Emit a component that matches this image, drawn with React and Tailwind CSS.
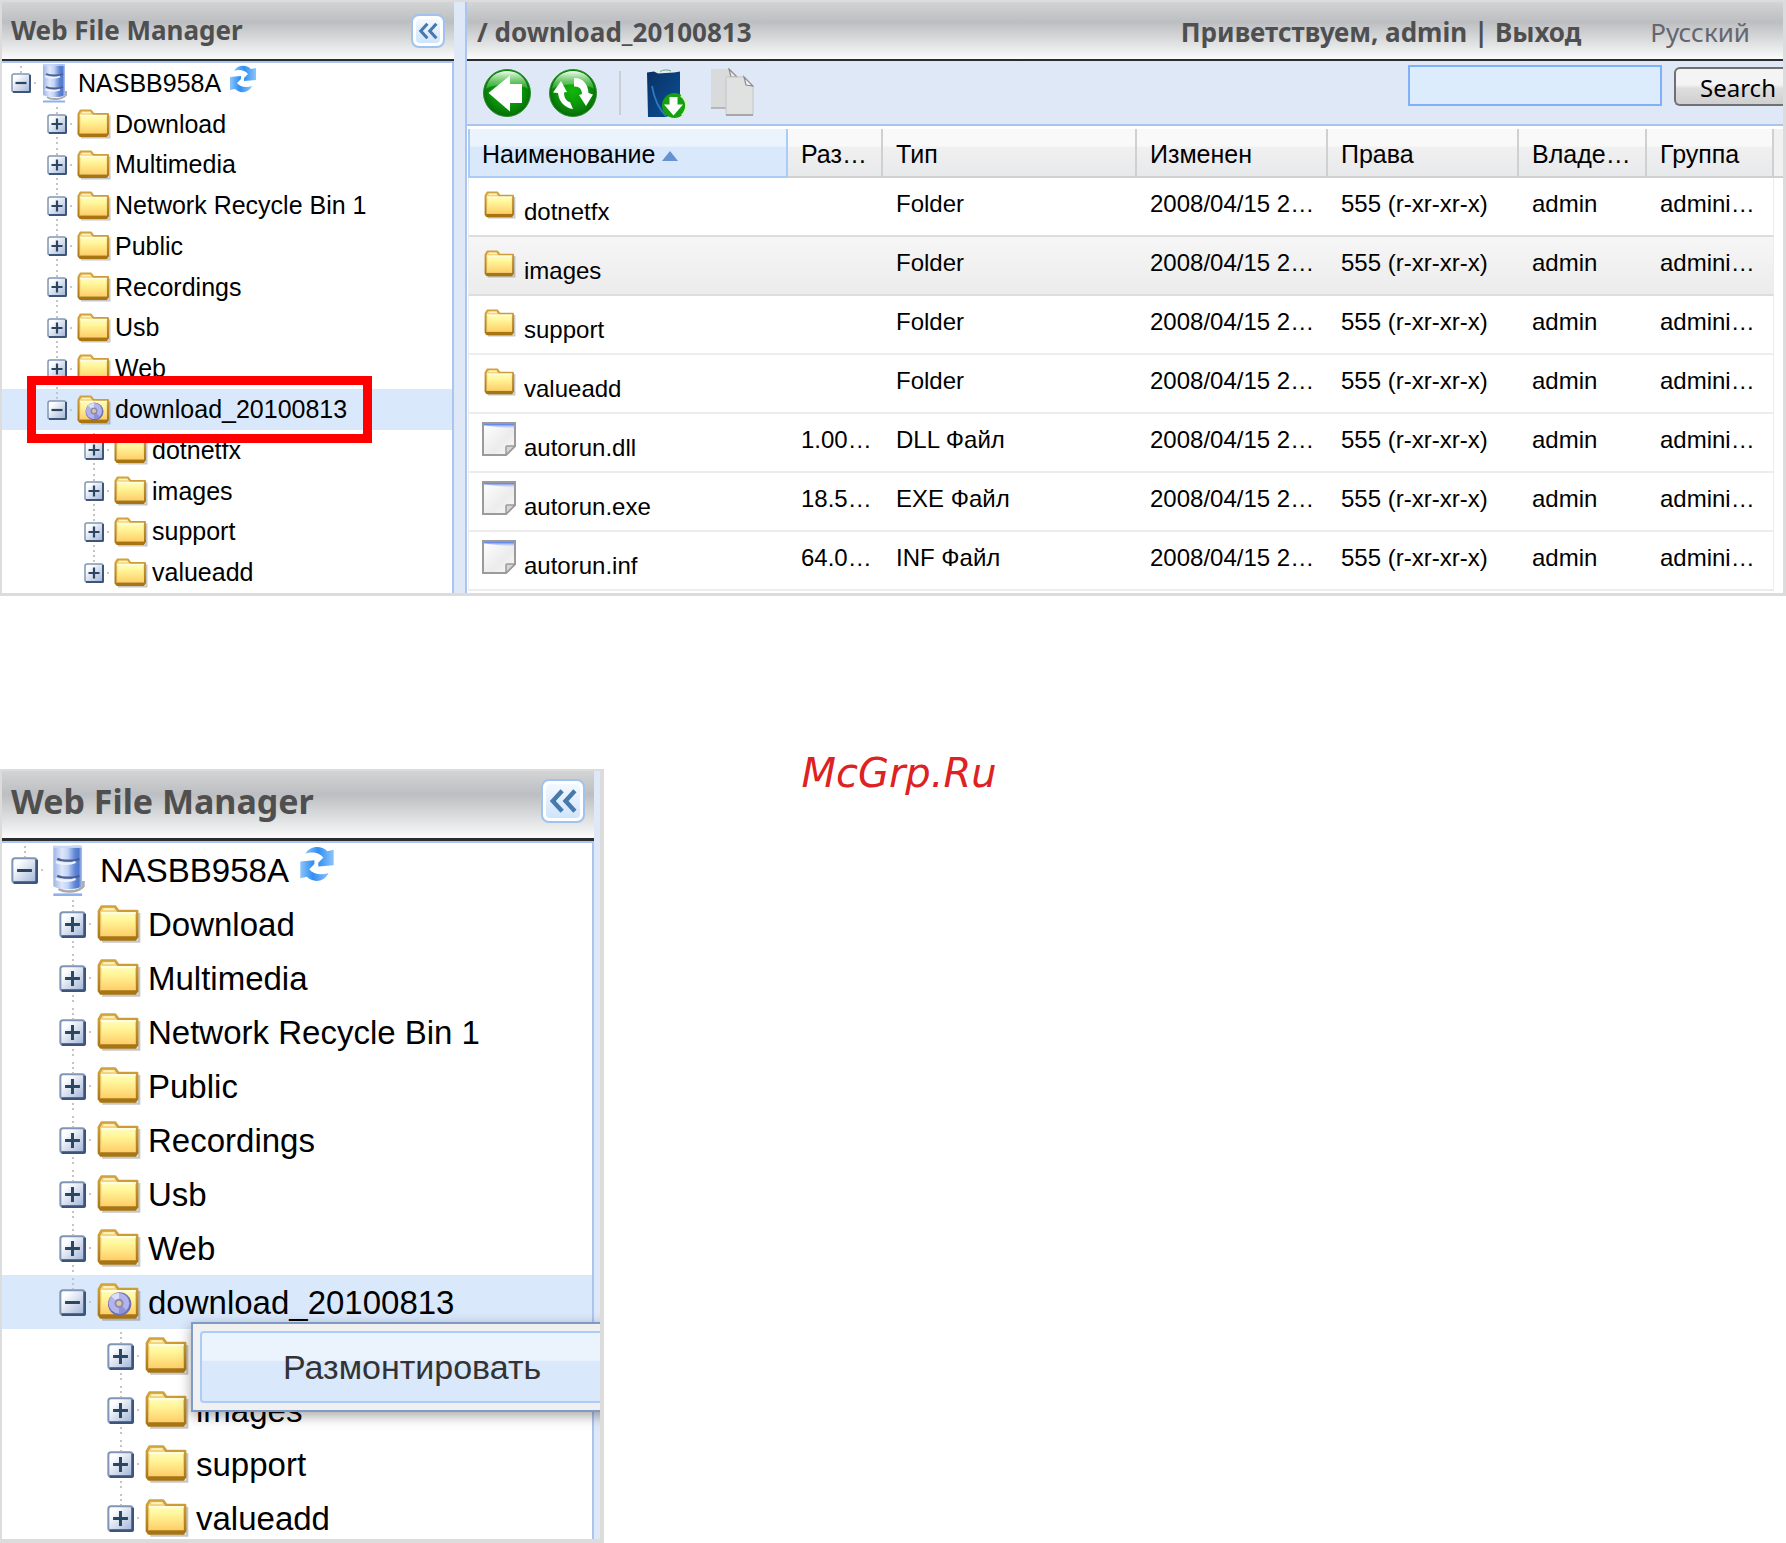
import React from 'react';

const ROWS = [
  { name: 'dotnetfx', type: 'Folder', folder: true },
  { name: 'images', type: 'Folder', folder: true, hover: true },
  { name: 'support', type: 'Folder', folder: true },
  { name: 'valueadd', type: 'Folder', folder: true },
  { name: 'autorun.dll', size: '1.00…', type: 'DLL Файл' },
  { name: 'autorun.exe', size: '18.5…', type: 'EXE Файл' },
  { name: 'autorun.inf', size: '64.0…', type: 'INF Файл' },
];

const NODES = [
  { name: 'NASBB958A', level: 0, open: true, icon: 'server', top: true },
  { name: 'Download', level: 1, top: true, bottom: true },
  { name: 'Multimedia', level: 1, top: true, bottom: true },
  { name: 'Network Recycle Bin 1', level: 1, top: true, bottom: true },
  { name: 'Public', level: 1, top: true, bottom: true },
  { name: 'Recordings', level: 1, top: true, bottom: true },
  { name: 'Usb', level: 1, top: true, bottom: true },
  { name: 'Web', level: 1, top: true, bottom: true },
  { name: 'download_20100813', level: 1, open: true, icon: 'iso', top: true, selected: true },
  { name: 'dotnetfx', level: 2, top: true, bottom: true },
  { name: 'images', level: 2, top: true, bottom: true },
  { name: 'support', level: 2, top: true, bottom: true },
  { name: 'valueadd', level: 2, top: true },
];

// Class sets for the two tree scales
const SIZES = {
  md: {
    row: 'flex-1 text-[25px]',
    indent: ['pl-[9px]', 'pl-[45px]', 'pl-[82px]'],
    expander: 'w-5',
    box: 'size-5',
    folder: 'w-[34px] h-[30px] ml-[5px] mr-[4px]',
    server: 'w-[26px] h-[40px] ml-[6px] mr-[10px]',
    refresh: 'size-7 ml-[8px] -mt-[8px]',
  },
  lg: {
    row: 'h-[54px] shrink-0 text-[33px]',
    indent: ['pl-[9px]', 'pl-[57px]', 'pl-[105px]'],
    expander: 'w-[27px]',
    box: 'size-[27px]',
    folder: 'w-[44px] h-[40px] ml-[6px] mr-[7px]',
    server: 'w-[34px] h-[53px] ml-[9px] mr-[14px]',
    refresh: 'size-9 ml-[10px] -mt-[12px]',
  },
};

// Gradients shared by all icons on the page
const IconDefs = () => (
  <svg width="0" height="0" className="absolute" aria-hidden="true">
    <defs>
      <linearGradient id="folderFill" x1="0" y1="0" x2="0" y2="1">
        <stop offset="0" stopColor="#fffbc0" />
        <stop offset="0.3" stopColor="#fff79a" />
        <stop offset="1" stopColor="#ffcf6a" />
      </linearGradient>
      <linearGradient id="folderEdge" x1="0" y1="0" x2="0" y2="1">
        <stop offset="0" stopColor="#d2a23c" />
        <stop offset="1" stopColor="#a87513" />
      </linearGradient>
      <linearGradient id="serverFill" x1="0" y1="0" x2="1" y2="0">
        <stop offset="0" stopColor="#9fb4e4" />
        <stop offset="0.3" stopColor="#dde7fb" />
        <stop offset="0.5" stopColor="#c3d3f5" />
        <stop offset="0.75" stopColor="#5f86d6" />
        <stop offset="0.88" stopColor="#4f78cc" />
        <stop offset="1" stopColor="#b4c6ee" />
      </linearGradient>
      <linearGradient id="plusFill" x1="0" y1="0" x2="1" y2="1">
        <stop offset="0.2" stopColor="#ffffff" />
        <stop offset="1" stopColor="#9fb3d8" />
      </linearGradient>
      <radialGradient id="greenFill" cx="0.5" cy="0.45" r="0.6">
        <stop offset="0" stopColor="#12b80c" />
        <stop offset="0.6" stopColor="#0a8f0a" />
        <stop offset="1" stopColor="#066006" />
      </radialGradient>
      <linearGradient id="greenGloss" x1="0" y1="0" x2="0" y2="1">
        <stop offset="0" stopColor="#f2fff0" />
        <stop offset="1" stopColor="#4cc04a" stopOpacity="0.5" />
      </linearGradient>
      <linearGradient id="blueArrow" x1="0" y1="0" x2="1" y2="0">
        <stop offset="0" stopColor="#8cc4fb" />
        <stop offset="0.45" stopColor="#2f8ff2" />
        <stop offset="1" stopColor="#8cc4fb" />
      </linearGradient>
      <linearGradient id="bookFill" x1="0" y1="0" x2="1" y2="1">
        <stop offset="0" stopColor="#0a3266" />
        <stop offset="1" stopColor="#0b5096" />
      </linearGradient>
      <linearGradient id="paperFill" x1="0" y1="0" x2="1" y2="1">
        <stop offset="0" stopColor="#ffffff" />
        <stop offset="0.6" stopColor="#ececec" />
        <stop offset="1" stopColor="#fafafa" />
      </linearGradient>
      <linearGradient id="paperTop" x1="0" y1="0" x2="0" y2="1">
        <stop offset="0" stopColor="#4a74ee" />
        <stop offset="1" stopColor="#c9d6fb" stopOpacity="0" />
      </linearGradient>
    </defs>
  </svg>
);

const FolderIcon = ({ className, disc }) => (
  <svg viewBox="0 0 34 30" className={`shrink-0 ${className}`} aria-hidden="true">
    <path d="M4 28.500h28.500v-22" fill="none" stroke="#000" strokeOpacity="0.22" strokeWidth="2" />
    <path d="M1.500 25V5l2-3.500h10.500l2.500 3.500H31v20l-1.500 2H3z" fill="#f3d37c" stroke="url(#folderEdge)" strokeWidth="2" strokeLinejoin="round" />
    <path d="M5 3.500h8.500" stroke="#fff3c0" strokeWidth="1.500" />
    <path d="M3.500 6.500h26V24h-26z" fill="url(#folderFill)" />
    <path d="M3 6.500h27" stroke="#fffde0" strokeWidth="1.500" />
    <path d="M2.500 25.800h28" stroke="#a87513" strokeWidth="2.500" />
    {disc && (
      <>
        <circle cx="17.500" cy="16.500" r="9" fill="#6d70b4" />
        <circle cx="17" cy="16" r="8" fill="#b3b4ee" />
        <path d="M17 16L11 10.500A8 8 0 0 1 17 8z" fill="#dcdcfb" />
        <path d="M17 16l6 5.500a8 8 0 0 1-6 2.500z" fill="#8f92d8" />
        <circle cx="17" cy="16" r="3.500" fill="#8b8ba8" />
        <circle cx="17" cy="16" r="2" fill="#d9c9a6" />
      </>
    )}
  </svg>
);

const ServerIcon = ({ className }) => (
  <svg viewBox="0 0 26 40" className={`shrink-0 ${className}`} aria-hidden="true">
    <path d="M5 34c4 3 15 3 19-2v-4" fill="none" stroke="#555" strokeOpacity="0.5" strokeWidth="2" />
    <path d="M1 1h22v31c-4 3-18 3-22 0z" fill="url(#serverFill)" />
    <path d="M1 2h22" stroke="#c9d6f5" strokeWidth="1.500" />
    <path d="M4 11c4 2 13 2 17 0" fill="none" stroke="#4c5f94" strokeWidth="1.800" />
    <path d="M4 24c4 2 13 2 17 0" fill="none" stroke="#4c5f94" strokeWidth="1.800" />
    <path d="M3 13.500c4 1.800 11 1.800 15 0M3 26.500c4 1.800 11 1.800 15 0" fill="none" stroke="#eef3fd" strokeWidth="1.800" />
    <path d="M1 38.500h22" stroke="#8fb0ee" strokeWidth="2" />
  </svg>
);

const RefreshSmall = ({ className }) => (
  <svg viewBox="0 0 28 28" className={className} aria-hidden="true">
    <path d="M5 6C8 0 17-1 22 4l5-1v12l-12 1v-3l4-4c-3-4-9-5-14-3z" fill="url(#blueArrow)" />
    <path d="M23 21c-3 7-12 8-17 3l-5 1V12l11-1v3l-4 4c3 4 9 5 15 3z" fill="url(#blueArrow)" />
  </svg>
);

const Expander = ({ open, className }) => (
  <svg viewBox="0 0 20 20" className={className} aria-hidden="true">
    <rect x="1" y="1" width="18" height="18" rx="2" fill="url(#plusFill)" stroke="#8096b4" strokeWidth="1.500" />
    <path d="M2 19h16.500q.5 0 .5-.5V2" fill="none" stroke="#3c5578" strokeWidth="2" />
    <path d={open ? 'M4.500 10h11' : 'M4.500 10h11M10 4.500v11'} stroke="#2b4661" strokeWidth="2.200" />
  </svg>
);

const BackIcon = () => (
  <svg viewBox="0 0 48 48" className="size-12" aria-hidden="true">
    <circle cx="24" cy="24" r="23.500" fill="url(#greenFill)" stroke="#2f8f2f" />
    <path d="M3 20C5 8 14 2 24 2s19 6 21 18c-8-6-34-6-42 0z" fill="url(#greenGloss)" />
    <path d="M5.500 24L27 6.500V15h12v19H27v8.500z" fill="#fff" />
  </svg>
);

const ReloadIcon = () => (
  <svg viewBox="0 0 48 48" className="size-12" aria-hidden="true">
    <circle cx="24" cy="24" r="23.500" fill="url(#greenFill)" stroke="#2f8f2f" />
    <path d="M3 20C5 8 14 2 24 2s19 6 21 18c-8-6-34-6-42 0z" fill="url(#greenGloss)" />
    <path d="M25 9c9 0 14 6 14.500 15L44 25.500 37 37l-7-11 3-1c0-5-3-8-8-7.500z" fill="#fff" />
    <path d="M24 40c-8-1-14-7-15-16l-5-.5L12 12l6 11-3 .5c0 6 3 9 6 9.500z" fill="#fff" />
  </svg>
);

const BookIcon = () => (
  <svg viewBox="0 0 42 50" className="h-[50px] w-[42px]" aria-hidden="true">
    <path d="M1 4l14-3 10 1 9 1v40z" fill="#e3eeea" />
    <path d="M14 3.500c3-2 8-2 11-.5" fill="none" stroke="#6a9a8c" strokeWidth="1" />
    <path d="M1 4.500l7-1 4 2 16-1 6-1V46l-15 3H2z" fill="url(#bookFill)" />
    <path d="M6 18c2 12 6 22 14 30" fill="none" stroke="#2d79c0" strokeWidth="1.800" />
    <circle cx="28.500" cy="37.500" r="12.500" fill="#17a00f" />
    <path d="M35 27.500c7 5 7 14 1 20" fill="none" stroke="#d8f3cf" strokeWidth="2.500" />
    <path d="M23.500 29h8v7.500H37L27.500 47.500 18 36.500h5.500z" fill="#fff" />
  </svg>
);

const CopyIcon = () => (
  <svg viewBox="0 0 44 50" className="h-[50px] w-[44px]" aria-hidden="true">
    <path d="M1 1h18l8 8v31H1z" fill="#d9dadb" />
    <path d="M1 40h26" stroke="#a9a9a9" strokeWidth="1.500" />
    <path d="M19 1l8 8h-6z" fill="#eee" stroke="#8c8c8c" strokeWidth="1.200" />
    <path d="M16 9h18l9 9v29H16z" fill="#e0e1e1" stroke="#c6c6c6" />
    <path d="M16 47h27" stroke="#999" strokeWidth="1.500" />
    <path d="M34 9l9 9-7-1z" fill="#f2f2f2" stroke="#8c8c8c" strokeWidth="1.200" />
  </svg>
);

const FileIcon = () => (
  <svg viewBox="0 0 34 34" className="size-[34px] shrink-0" aria-hidden="true">
    <path d="M1 1h32v23l-9 9H1z" fill="url(#paperFill)" stroke="#9b9b9b" strokeWidth="2" />
    <path d="M2 2h30v5L2 3.500z" fill="url(#paperTop)" />
    <path d="M24 33v-8q0-1 1-1h8z" fill="#d6d6d6" stroke="#9b9b9b" strokeWidth="1.500" />
  </svg>
);

const CollapseButton = ({ className }) => (
  <button
    type="button"
    aria-label="Collapse"
    className={`rounded-lg border-2 border-[#9fc3ee] bg-white p-[3px] ${className}`}
  >
    <svg
      viewBox="0 0 20 20"
      className="size-full rounded bg-linear-to-b from-[#f4f9ff] to-[#cfe4fb]"
      fill="none"
      stroke="#4679ad"
      strokeWidth="2.600"
      aria-hidden="true"
    >
      <path d="M9.500 4L4 10l5.500 6M17 4l-5.500 6 5.500 6" />
    </svg>
  </button>
);

const Bar = ({ className, children }) => (
  <div
    className={`flex items-center border-[#2a2c30] bg-linear-to-b from-[#d3d4d5] via-[#bdbec1] via-35% to-[#fafbfa] font-bold text-[#4f4f4f] font-['Noto_Sans',sans-serif] ${className}`}
  >
    {children}
  </div>
);

const DOTS = 'w-[2px] flex-1 bg-[repeating-linear-gradient(transparent_0_3px,#c4c4c4_3px_5px)]';

const TreeNode = ({ node, size, children }) => {
  const s = SIZES[size];
  return (
    <li
      className={`relative flex items-center leading-none whitespace-nowrap ${s.row} ${s.indent[node.level]} ${node.selected ? 'bg-[#d9e8fb]' : ''}`}
    >
      <div className={`flex h-full shrink-0 flex-col items-center ${s.expander}`}>
        <span className={node.top ? DOTS : 'flex-1'} />
        <button type="button" aria-label={node.open ? 'Collapse' : 'Expand'} className={`block ${s.box}`}>
          <Expander open={node.open} className="size-full" />
        </button>
        <span className={node.bottom ? DOTS : 'flex-1'} />
      </div>
      <span className="ml-[3px] size-[2px] shrink-0 bg-[#c8c8c8]" />
      {node.icon === 'server' ? (
        <ServerIcon className={s.server} />
      ) : (
        <FolderIcon className={s.folder} disc={node.icon === 'iso'} />
      )}
      <span>{node.name}</span>
      {node.icon === 'server' && <RefreshSmall className={s.refresh} />}
      {node.selected && children}
    </li>
  );
};

const Tree = ({ size, children }) => (
  <ul className="flex flex-1 flex-col border-t-2 border-r-2 border-[#a9c5f0] bg-white">
    {NODES.map((node) => (
      <TreeNode key={`${node.level}-${node.name}`} node={node} size={size}>
        {children}
      </TreeNode>
    ))}
  </ul>
);

const Toolbar = () => (
  <div className="flex h-[65px] items-center border-b-2 border-[#a9c5ec] bg-[#dfe8f6] pl-4">
    <button type="button" aria-label="Back"><BackIcon /></button>
    <button type="button" aria-label="Refresh" className="ml-[18px]"><ReloadIcon /></button>
    <span className="mr-[25px] ml-[22px] h-11 w-[2px] bg-[#cbcdd2]" />
    <button type="button" aria-label="Mount"><BookIcon /></button>
    <button type="button" aria-label="Copy" className="ml-[22px]"><CopyIcon /></button>
    <input
      type="text"
      aria-label="Search"
      className="mb-[14px] ml-auto h-[41px] w-[254px] border-2 border-[#7fb0f8] bg-[#dcecfd] px-2 text-[24px] outline-none"
    />
    <button
      type="button"
      className="mb-3 ml-3 h-[39px] w-[109px] rounded-l-md border-2 border-r-0 border-[#707070] bg-linear-to-b from-[#f4f4f4] from-45% via-[#dedede] via-55% to-[#cfcfcf] pt-[2px] pl-6 text-left text-[24px] leading-none font-['Noto_Sans',sans-serif]"
    >
      Search
    </button>
  </div>
);

const HeadCell = ({ children }) => (
  <th className="border-r-2 border-b-2 border-[#d0d0d0] bg-linear-to-b from-[#f9f9f9] from-35% via-[#f0f0f1] via-40% to-[#e8e9eb] pt-[2px] pl-[13px] text-left font-normal whitespace-nowrap">
    {children}
  </th>
);

const FileTable = () => (
  <table className="w-full table-fixed border-separate border-spacing-0 text-[24px] leading-7">
    <colgroup>
      <col />
      <col className="w-[95px]" />
      <col className="w-[254px]" />
      <col className="w-[191px]" />
      <col className="w-[191px]" />
      <col className="w-[128px]" />
      <col className="w-[127px]" />
      <col className="w-[9px]" />
    </colgroup>
    <thead className="text-[25px]">
      <tr className="h-[49px]">
        <th className="border-2 border-t-0 border-[#aaccf6] bg-linear-to-b from-[#ebf3fd] from-35% to-[#d9e8fb] to-40% pt-[2px] pl-3 text-left font-normal">
          <span className="flex items-center gap-[7px]">
            Наименование
            <svg viewBox="0 0 16 10" className="mt-1 h-[10px] w-4" aria-hidden="true">
              <path d="M8 0l8 10H0z" fill="#6593cf" />
            </svg>
          </span>
        </th>
        <HeadCell>Раз…</HeadCell>
        <HeadCell>Тип</HeadCell>
        <HeadCell>Изменен</HeadCell>
        <HeadCell>Права</HeadCell>
        <HeadCell>Владе…</HeadCell>
        <HeadCell>Группа</HeadCell>
        <th className="border-b-2 border-[#d0d0d0] bg-[#f1f1f2]" />
      </tr>
    </thead>
    <tbody>
      {ROWS.map((row, i) => {
        const cell = `h-[59px] whitespace-nowrap border-b-2 align-top pt-3 pl-[13px] ${
          row.hover ? 'bg-linear-to-b from-[#f6f6f6] to-[#ececec]' : ''
        } ${i < 2 ? 'border-[#dddddd]' : 'border-[#ededed]'}`;
        return (
          <tr key={row.name}>
            <td className={`${cell} border-l border-l-[#ededed]`}>
              <div className="-mt-1 flex items-start gap-2">
                {row.folder ? (
                  <span className="w-[34px] shrink-0 pt-[5px] pl-[2px]">
                    <FolderIcon className="h-[28px] w-[32px]" />
                  </span>
                ) : (
                  <FileIcon />
                )}
                <span className="pt-3">{row.name}</span>
              </div>
            </td>
            <td className={`${cell} pr-[12px] text-right`}>{row.size}</td>
            <td className={cell}>{row.type}</td>
            <td className={cell}>2008/04/15 2…</td>
            <td className={cell}>555 (r-xr-xr-x)</td>
            <td className={cell}>admin</td>
            <td className={`${cell} border-r border-r-[#ededed]`}>admini…</td>
            <td />
          </tr>
        );
      })}
    </tbody>
  </table>
);

const FileManager = () => (
  <section className="flex overflow-hidden border-2 border-r-[3px] border-b-[3px] border-[#dcdcdc] bg-[#dfe8f6]">
    <aside className="flex w-[452px] shrink-0 flex-col">
      <Bar className="h-[59px] justify-between border-b-2 pr-[9px] pl-[9px] text-[26px]">
        <h1>Web File Manager</h1>
        <CollapseButton className="size-[34px]" />
      </Bar>
      <Tree size="md">
        <div className="absolute -inset-y-[13px] left-[25px] z-10 w-[345px] border-[9px] border-[#fe0000]" />
      </Tree>
    </aside>
    <main className="ml-[11px] min-w-0 flex-1 border-l-2 border-[#a9c5f0] bg-white">
      <Bar className="h-[59px] border-b-2 pt-1 pr-[33px] pl-[10px] text-[26px]">
        <h2 className="mr-auto">/ download_20100813</h2>
        <p>
          Приветствуем, admin | <a href="#logout">Выход</a>
        </p>
        <button type="button" className="ml-[69px] font-normal text-[#66666e]">
          Русский
        </button>
      </Bar>
      <Toolbar />
      <div className="py-[2px] pt-[3px] pl-px">
        <FileTable />
      </div>
    </main>
  </section>
);

const UnmountMenu = () => (
  <div className="absolute top-[47px] -right-8 left-[189px] z-10 border-2 border-[#7f9ac4] bg-[#f0f0f0] p-[7px] shadow-[0_4px_12px_rgba(0,0,0,0.35)]">
    <button
      type="button"
      className="flex h-[72px] w-full items-center rounded border-2 border-[#aaccf6] bg-linear-to-b from-[#ebf3fd] from-40% to-[#d9e8fb] to-42% pl-[81px] text-[34px] text-[#333333]"
    >
      Размонтировать
    </button>
  </div>
);

const TreePanel = () => (
  <section className="flex w-[604px] shrink-0 overflow-hidden border-2 border-r-4 border-b-4 border-[#dcdcdc] bg-[#dfe8f6] pr-[6px]">
    <aside className="flex min-w-0 flex-1 flex-col">
      <Bar className="h-[70px] shrink-0 justify-between border-b-[3px] pr-[9px] pb-2 pl-[9px] text-[34px] leading-none">
        <h2>Web File Manager</h2>
        <CollapseButton className="size-11" />
      </Bar>
      <Tree size="lg">
        <UnmountMenu />
      </Tree>
    </aside>
  </section>
);

export default function App() {
  return (
    <div className="flex h-screen flex-col bg-white text-black font-['Liberation_Sans',Arial,sans-serif]">
      <IconDefs />
      <FileManager />
      <p className="flex h-[173px] items-end justify-center pl-3 text-[40px] leading-none text-[#dd2222] italic font-['DejaVu_Sans',sans-serif]">
        <span className="translate-y-6">McGrp.Ru</span>
      </p>
      <div className="flex min-h-0 flex-1">
        <TreePanel />
      </div>
    </div>
  );
}
